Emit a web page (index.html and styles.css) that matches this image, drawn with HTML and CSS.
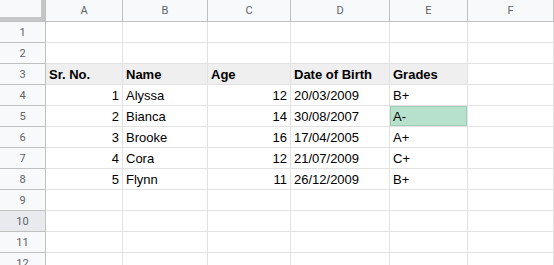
FILE: index.html
```html
<!DOCTYPE html>
<html lang="en">
<head>
    <meta charset="UTF-8">
    <meta name="viewport" content="width=device-width, initial-scale=1.0">
    <title>Students</title>
    <link rel="stylesheet" href="styles.css">
</head>
<body>
    <div class="sheet">
        <div class="corner"></div>
        <div class="col-head">A</div>
        <div class="col-head">B</div>
        <div class="col-head">C</div>
        <div class="col-head">D</div>
        <div class="col-head">E</div>
        <div class="col-head">F</div>

        <div class="row-head">1</div>
        <div class="cell"></div><div class="cell"></div><div class="cell"></div><div class="cell"></div><div class="cell"></div><div class="cell"></div>

        <div class="row-head">2</div>
        <div class="cell"></div><div class="cell"></div><div class="cell"></div><div class="cell"></div><div class="cell"></div><div class="cell"></div>

        <div class="row-head">3</div>
        <div class="cell title">Sr. No.</div>
        <div class="cell title">Name</div>
        <div class="cell title">Age</div>
        <div class="cell title">Date of Birth</div>
        <div class="cell title">Grades</div>
        <div class="cell"></div>

        <div class="row-head">4</div>
        <div class="cell num">1</div>
        <div class="cell">Alyssa</div>
        <div class="cell num">12</div>
        <div class="cell">20/03/2009</div>
        <div class="cell">B+</div>
        <div class="cell"></div>

        <div class="row-head">5</div>
        <div class="cell num">2</div>
        <div class="cell">Bianca</div>
        <div class="cell num">14</div>
        <div class="cell">30/08/2007</div>
        <div class="cell marked">A-</div>
        <div class="cell"></div>

        <div class="row-head">6</div>
        <div class="cell num">3</div>
        <div class="cell">Brooke</div>
        <div class="cell num">16</div>
        <div class="cell">17/04/2005</div>
        <div class="cell">A+</div>
        <div class="cell"></div>

        <div class="row-head">7</div>
        <div class="cell num">4</div>
        <div class="cell">Cora</div>
        <div class="cell num">12</div>
        <div class="cell">21/07/2009</div>
        <div class="cell">C+</div>
        <div class="cell"></div>

        <div class="row-head">8</div>
        <div class="cell num">5</div>
        <div class="cell">Flynn</div>
        <div class="cell num">11</div>
        <div class="cell">26/12/2009</div>
        <div class="cell">B+</div>
        <div class="cell"></div>

        <div class="row-head">9</div>
        <div class="cell"></div><div class="cell"></div><div class="cell"></div><div class="cell"></div><div class="cell"></div><div class="cell"></div>

        <div class="row-head active">10</div>
        <div class="cell"></div><div class="cell"></div><div class="cell"></div><div class="cell"></div><div class="cell"></div><div class="cell"></div>

        <div class="row-head">11</div>
        <div class="cell"></div><div class="cell"></div><div class="cell"></div><div class="cell"></div><div class="cell"></div><div class="cell"></div>

        <div class="row-head">12</div>
        <div class="cell"></div><div class="cell"></div><div class="cell"></div><div class="cell"></div><div class="cell"></div><div class="cell"></div>
    </div>
</body>
</html>
```

FILE: styles.css
```css
body {
    margin: 0;
    background-color: #ffffff;
    font-family: "Liberation Sans", Arial, sans-serif;
    overflow: hidden;
}
.sheet {
    display: grid;
    grid-template-columns: 46px 77px 85px 83px 99px 78px 1fr;
    grid-template-rows: 22px repeat(12, 21px);
}
.sheet > div {
    box-sizing: border-box;
}
.corner {
    background-color: #f8f9fa;
    border-right: 1px solid #c0c0c0;
    border-bottom: 1px solid #c0c0c0;
    box-shadow: inset -4px -4px 0 #c4c7c5;
    position: relative;
}
.col-head {
    background-color: #f8f9fa;
    border-right: 1px solid #c0c0c0;
    border-bottom: 1px solid #c0c0c0;
    color: #5f6368;
    font-family: Roboto, Arial, sans-serif;
    font-size: 11px;
    display: flex;
    align-items: center;
    justify-content: center;
}
.row-head {
    background-color: #f8f9fa;
    border-right: 1px solid #c0c0c0;
    border-bottom: 1px solid #c0c0c0;
    color: #5f6368;
    font-family: Roboto, Arial, sans-serif;
    font-size: 11px;
    display: flex;
    align-items: center;
    justify-content: center;
}
.row-head.active {
    background-color: #e8eaed;
}
.cell {
    border-right: 1px solid #e2e2e2;
    border-bottom: 1px solid #e2e2e2;
    color: #000000;
    font-size: 13px;
    line-height: 15px;
    padding: 0 3px 2px;
    display: flex;
    align-items: flex-end;
    white-space: nowrap;
}
.cell.num {
    justify-content: flex-end;
}
.cell.title {
    background-color: #efefef;
    font-weight: bold;
}
.cell.marked {
    background-color: #b7e1cd;
    box-shadow: inset 0 0 0 1px #9fcfb7;
}
```
